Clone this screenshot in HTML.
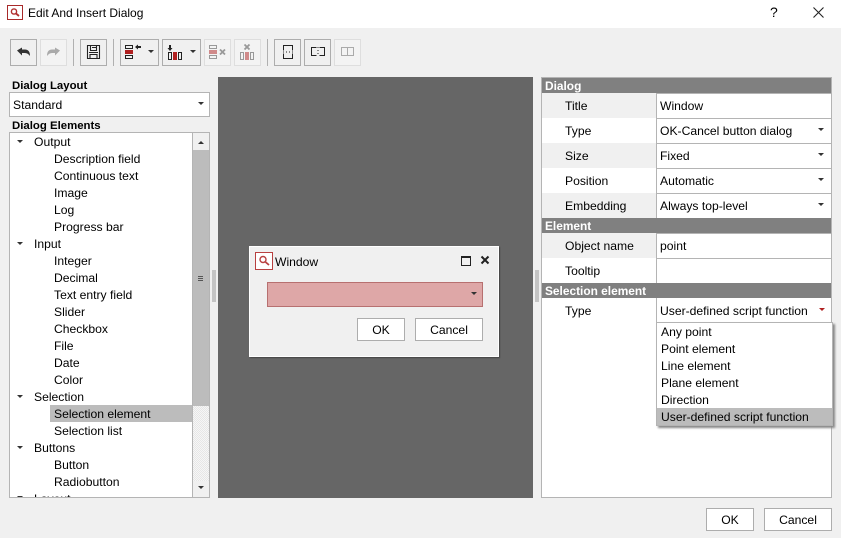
<!DOCTYPE html>
<html><head><meta charset="utf-8"><style>
html,body{margin:0;padding:0;}
body{width:841px;height:538px;overflow:hidden;background:#f0f0f0;position:relative;font:12.15px "Liberation Sans",sans-serif;color:#000;}
.a{position:absolute;box-sizing:border-box;}
.t{position:absolute;white-space:nowrap;line-height:17px;height:17px;margin-top:1px;}
.b{font-weight:bold;font-size:11.4px;}
.btn{position:absolute;box-sizing:border-box;background:#fff;border:1px solid #adadad;text-align:center;line-height:23px;}
.tb{position:absolute;box-sizing:border-box;top:39px;height:27px;border:1px solid #adadad;background:#f0f0f0;}
.tb.d{border-color:#dedede;background:#f3f3f3;}
.sep{position:absolute;top:39px;height:27px;width:1px;background:#b0b0b0;}
.arr{position:absolute;width:0;height:0;border-left:3px solid transparent;border-right:3px solid transparent;border-top:3px solid #333;}
.hd{position:absolute;left:542px;width:289px;height:15px;background:#808080;color:#fff;font-weight:bold;font-size:11.9px;line-height:17px;padding-left:3px;box-sizing:border-box;overflow:hidden;}
.lab{position:absolute;left:542px;width:114px;height:25px;line-height:26px;padding-left:23px;box-sizing:border-box;}
.val{position:absolute;left:657px;width:174px;height:24px;background:#fff;line-height:25px;padding-left:3px;box-sizing:border-box;}
svg{position:absolute;}
</style></head><body>
<div class="a" style="left:0;top:0;width:841px;height:28px;background:#fff;"></div>
<div class="a" style="left:7px;top:5px;width:16px;height:15px;border:1px solid #a82a2a;background:#fff;"></div>
<svg style="left:7px;top:5px" width="16" height="15"><circle cx="7" cy="6.5" r="2.6" fill="none" stroke="#b03030" stroke-width="1.4"/><path d="M9 8.5L12 11" stroke="#b03030" stroke-width="1.8"/></svg>
<div class="t" style="left:28px;top:4px;font-size:12px;">Edit And Insert Dialog</div>
<div class="t" style="left:770px;top:3px;font-size:14px;">?</div>
<svg style="left:812px;top:6px" width="14" height="14"><path d="M1.5 1.5L11.5 11.5M11.5 1.5L1.5 11.5" stroke="#222" stroke-width="1.1"/></svg>

<!-- toolbar -->
<div class="tb" style="left:10px;width:27px;"></div>
<svg style="left:16px;top:47px" width="16" height="11"><path d="M1 3.5L6 0.5V2.5H9C12.5 2.5 14 5 14 9C12.5 7 11 6 9 6H6V8.5Z" fill="#333"/></svg>
<div class="tb d" style="left:40px;width:27px;"></div>
<svg style="left:46px;top:47px" width="16" height="11"><path d="M14 3.5L9 0.5V2.5H6C2.5 2.5 1 5 1 9C2.5 7 4 6 6 6H9V8.5Z" fill="#aaa"/></svg>
<div class="sep" style="left:73px;"></div>
<div class="tb" style="left:80px;width:27px;"></div>
<svg style="left:86px;top:44px" width="15" height="16"><path d="M1.5 1.5H13.5V14.5H1.5ZM4.5 1.5V6.5H10.5V1.5M4 14.5V10.5H11V14.5M6 3.5H10M3 8.5H12" fill="none" stroke="#222" stroke-width="1.1"/></svg>
<div class="sep" style="left:113px;"></div>
<div class="tb" style="left:120px;width:39px;"></div>
<svg style="left:124px;top:44px" width="24" height="16"><rect x="1.5" y="1.5" width="7" height="3" fill="none" stroke="#222"/><rect x="1" y="6" width="8" height="4" fill="#b02020"/><rect x="1.5" y="11.5" width="7" height="3" fill="none" stroke="#222"/><path d="M11 3L14 0.5V2H17V4H14V5.5Z" fill="#222"/></svg>
<div class="arr" style="left:148px;top:50px;"></div>
<div class="tb" style="left:162px;width:39px;"></div>
<svg style="left:167px;top:43px" width="20" height="18"><path d="M3 8L0.5 5H2V2H4V5H5.5Z" fill="#222"/><rect x="1.5" y="9.5" width="3" height="7" fill="none" stroke="#222"/><rect x="6" y="9" width="4" height="8" fill="#b02020"/><rect x="11.5" y="9.5" width="3" height="7" fill="none" stroke="#222"/></svg>
<div class="arr" style="left:190px;top:50px;"></div>
<div class="tb d" style="left:204px;width:27px;"></div>
<svg style="left:208px;top:44px" width="20" height="16"><rect x="1.5" y="1.5" width="7" height="3" fill="none" stroke="#999"/><rect x="1" y="6" width="8" height="4" fill="#d08a8a"/><rect x="1.5" y="11.5" width="7" height="3" fill="none" stroke="#999"/><path d="M12 5.5L17 10.5M17 5.5L12 10.5" stroke="#999" stroke-width="1.8"/></svg>
<div class="tb d" style="left:234px;width:27px;"></div>
<svg style="left:239px;top:43px" width="18" height="18"><path d="M5.5 1.5L10.5 6.5M10.5 1.5L5.5 6.5" stroke="#999" stroke-width="1.8"/><rect x="1.5" y="9.5" width="3" height="7" fill="none" stroke="#999"/><rect x="6" y="9" width="4" height="8" fill="#d08a8a"/><rect x="11.5" y="9.5" width="3" height="7" fill="none" stroke="#999"/></svg>
<div class="sep" style="left:267px;"></div>
<div class="tb" style="left:274px;width:27px;"></div>
<svg style="left:280px;top:44px" width="16" height="16"><path d="M3.5 6.5V1.5H12.5V6.5M3.5 9.5V14.5H12.5V9.5" fill="none" stroke="#222"/><path d="M3 8H13" stroke="#222" stroke-dasharray="1 2"/></svg>
<div class="tb" style="left:304px;width:27px;"></div>
<svg style="left:310px;top:46px" width="16" height="12"><path d="M6.5 1.5H1.5V9.5H6.5M9.5 1.5H14.5V9.5H9.5" fill="none" stroke="#222"/><path d="M8 1V10" stroke="#222" stroke-dasharray="1 2"/></svg>
<div class="tb d" style="left:334px;width:27px;"></div>
<svg style="left:340px;top:46px" width="16" height="12"><path d="M1.5 1.5H13.5V9.5H1.5ZM7.5 1.5V9.5" fill="none" stroke="#aaa"/></svg>

<!-- left -->
<div class="t b" style="left:12px;top:77px;">Dialog Layout</div>
<div class="a" style="left:9px;top:92px;width:201px;height:25px;background:#fff;border:1px solid #b4b4b4;"></div>
<div class="t" style="left:13px;top:96px;">Standard</div>
<div class="arr" style="left:198px;top:102px;"></div>
<div class="t b" style="left:12px;top:117px;">Dialog Elements</div>
<div class="a" style="left:9px;top:132px;width:201px;height:366px;background:#fff;border:1px solid #b4b4b4;overflow:hidden;">
<div class="a" style="left:182px;top:0;width:17px;height:364px;background:#f0f0f0;border-left:1px solid #b4b4b4;"></div>
<div class="a" style="left:183px;top:17px;width:16px;height:256px;background:#bcbcbc;"></div>
<div class="a" style="left:183px;top:273px;width:16px;height:75px;background:repeating-conic-gradient(#e6e6e6 0 25%,#f6f6f6 0 50%) 0 0/2px 2px;"></div>
<div class="a" style="left:40px;top:272px;width:142px;height:17px;background:#bcbcbc;"></div>
</div>
<div class="arr" style="left:198px;top:141px;border-top:0;border-bottom:3px solid #333;"></div>
<div class="arr" style="left:198px;top:486px;"></div>
<div class="a" style="left:198px;top:276px;width:5px;height:5px;background:repeating-linear-gradient(#555 0 1px,transparent 1px 2px);"></div>
<div class="arr" style="left:17px;top:140px;"></div><div class="t" style="left:34px;top:133px;">Output</div>
<div class="t" style="left:54px;top:150px;">Description field</div>
<div class="t" style="left:54px;top:167px;">Continuous text</div>
<div class="t" style="left:54px;top:184px;">Image</div>
<div class="t" style="left:54px;top:201px;">Log</div>
<div class="t" style="left:54px;top:218px;">Progress bar</div>
<div class="arr" style="left:17px;top:242px;"></div><div class="t" style="left:34px;top:235px;">Input</div>
<div class="t" style="left:54px;top:252px;">Integer</div>
<div class="t" style="left:54px;top:269px;">Decimal</div>
<div class="t" style="left:54px;top:286px;">Text entry field</div>
<div class="t" style="left:54px;top:303px;">Slider</div>
<div class="t" style="left:54px;top:320px;">Checkbox</div>
<div class="t" style="left:54px;top:337px;">File</div>
<div class="t" style="left:54px;top:354px;">Date</div>
<div class="t" style="left:54px;top:371px;">Color</div>
<div class="arr" style="left:17px;top:395px;"></div><div class="t" style="left:34px;top:388px;">Selection</div>
<div class="t" style="left:54px;top:405px;">Selection element</div>
<div class="t" style="left:54px;top:422px;">Selection list</div>
<div class="arr" style="left:17px;top:446px;"></div><div class="t" style="left:34px;top:439px;">Buttons</div>
<div class="t" style="left:54px;top:456px;">Button</div>
<div class="t" style="left:54px;top:473px;">Radiobutton</div>
<div class="a" style="left:10px;top:490px;width:182px;height:7px;overflow:hidden;"><div class="arr" style="left:7px;top:6px;"></div><div class="t" style="left:24px;top:0px;">Layout</div></div>

<!-- splitters -->
<div class="a" style="left:212px;top:270px;width:4px;height:32px;background:#c4c4c4;"></div>
<div class="a" style="left:535px;top:270px;width:4px;height:32px;background:#c4c4c4;"></div>

<!-- centre -->
<div class="a" style="left:218px;top:77px;width:315px;height:421px;background:#666;"></div>
<div class="a" style="left:249px;top:246px;width:250px;height:111px;background:#f0f0f0;border:1px solid #fff;box-shadow:1px 1px 1px #444;"></div>
<div class="a" style="left:255px;top:252px;width:18px;height:18px;border:1px solid #b84040;background:#fff;"></div>
<svg style="left:255px;top:252px" width="18" height="18"><circle cx="8" cy="7.5" r="3" fill="none" stroke="#b84040" stroke-width="1.4"/><path d="M10.5 10L14 13" stroke="#b84040" stroke-width="1.8"/></svg>
<div class="t" style="left:275px;top:253px;">Window</div>
<div class="a" style="left:461px;top:256px;width:10px;height:10px;border:1px solid #222;border-top-width:2px;"></div>
<svg style="left:480px;top:255px" width="11" height="11"><path d="M1.5 1.5L8.5 8.5M8.5 1.5L1.5 8.5" stroke="#222" stroke-width="2"/></svg>
<div class="a" style="left:267px;top:282px;width:216px;height:25px;background:#dea7a7;border:1px solid #b77070;"></div>
<div class="arr" style="left:471px;top:292px;"></div>
<div class="btn" style="left:357px;top:318px;width:48px;height:23px;">OK</div>
<div class="btn" style="left:415px;top:318px;width:68px;height:23px;">Cancel</div>

<!-- right -->
<div class="a" style="left:541px;top:77px;width:291px;height:421px;background:#fff;border:1px solid #b4b4b4;"></div>
<div class="a" style="left:656px;top:93px;width:176px;height:125px;background:#b4b4b4;"></div>
<div class="a" style="left:656px;top:233px;width:176px;height:50px;background:#b4b4b4;"></div>
<div class="a" style="left:656px;top:298px;width:1px;height:25px;background:#b4b4b4;"></div>
<div class="hd" style="top:78px;">Dialog</div>
<div class="lab" style="top:93px;background:#f0f0f0;">Title</div><div class="val" style="top:94px;">Window</div>
<div class="lab" style="top:118px;background:#fff;">Type</div><div class="val" style="top:119px;">OK-Cancel button dialog</div><div class="arr" style="left:818px;top:128px;"></div>
<div class="lab" style="top:143px;background:#f0f0f0;">Size</div><div class="val" style="top:144px;">Fixed</div><div class="arr" style="left:818px;top:153px;"></div>
<div class="lab" style="top:168px;background:#fff;">Position</div><div class="val" style="top:169px;">Automatic</div><div class="arr" style="left:818px;top:178px;"></div>
<div class="lab" style="top:193px;background:#f0f0f0;">Embedding</div><div class="val" style="top:194px;">Always top-level</div><div class="arr" style="left:818px;top:203px;"></div>
<div class="hd" style="top:218px;">Element</div>
<div class="lab" style="top:233px;background:#f0f0f0;">Object name</div><div class="val" style="top:234px;">point</div>
<div class="lab" style="top:258px;background:#fff;">Tooltip</div><div class="val" style="top:259px;"></div>
<div class="hd" style="top:283px;">Selection element</div>
<div class="lab" style="top:298px;background:#fff;">Type</div>
<div class="val" style="top:299px;">User-defined script function</div>
<div class="arr" style="left:819px;top:308px;border-top-color:#b02020;"></div>
<div class="a" style="left:656px;top:322px;width:177px;height:104px;background:#fff;border:1px solid #b4b4b4;box-shadow:2px 2px 2px #888;"></div>
<div class="a" style="left:657px;top:408px;width:175px;height:17px;background:#bcbcbc;"></div>
<div class="t" style="left:661px;top:323px;">Any point</div>
<div class="t" style="left:661px;top:340px;">Point element</div>
<div class="t" style="left:661px;top:357px;">Line element</div>
<div class="t" style="left:661px;top:374px;">Plane element</div>
<div class="t" style="left:661px;top:391px;">Direction</div>
<div class="t" style="left:661px;top:408px;">User-defined script function</div>

<!-- bottom -->
<div class="btn" style="left:706px;top:508px;width:48px;height:23px;">OK</div>
<div class="btn" style="left:764px;top:508px;width:68px;height:23px;">Cancel</div>
</body></html>
